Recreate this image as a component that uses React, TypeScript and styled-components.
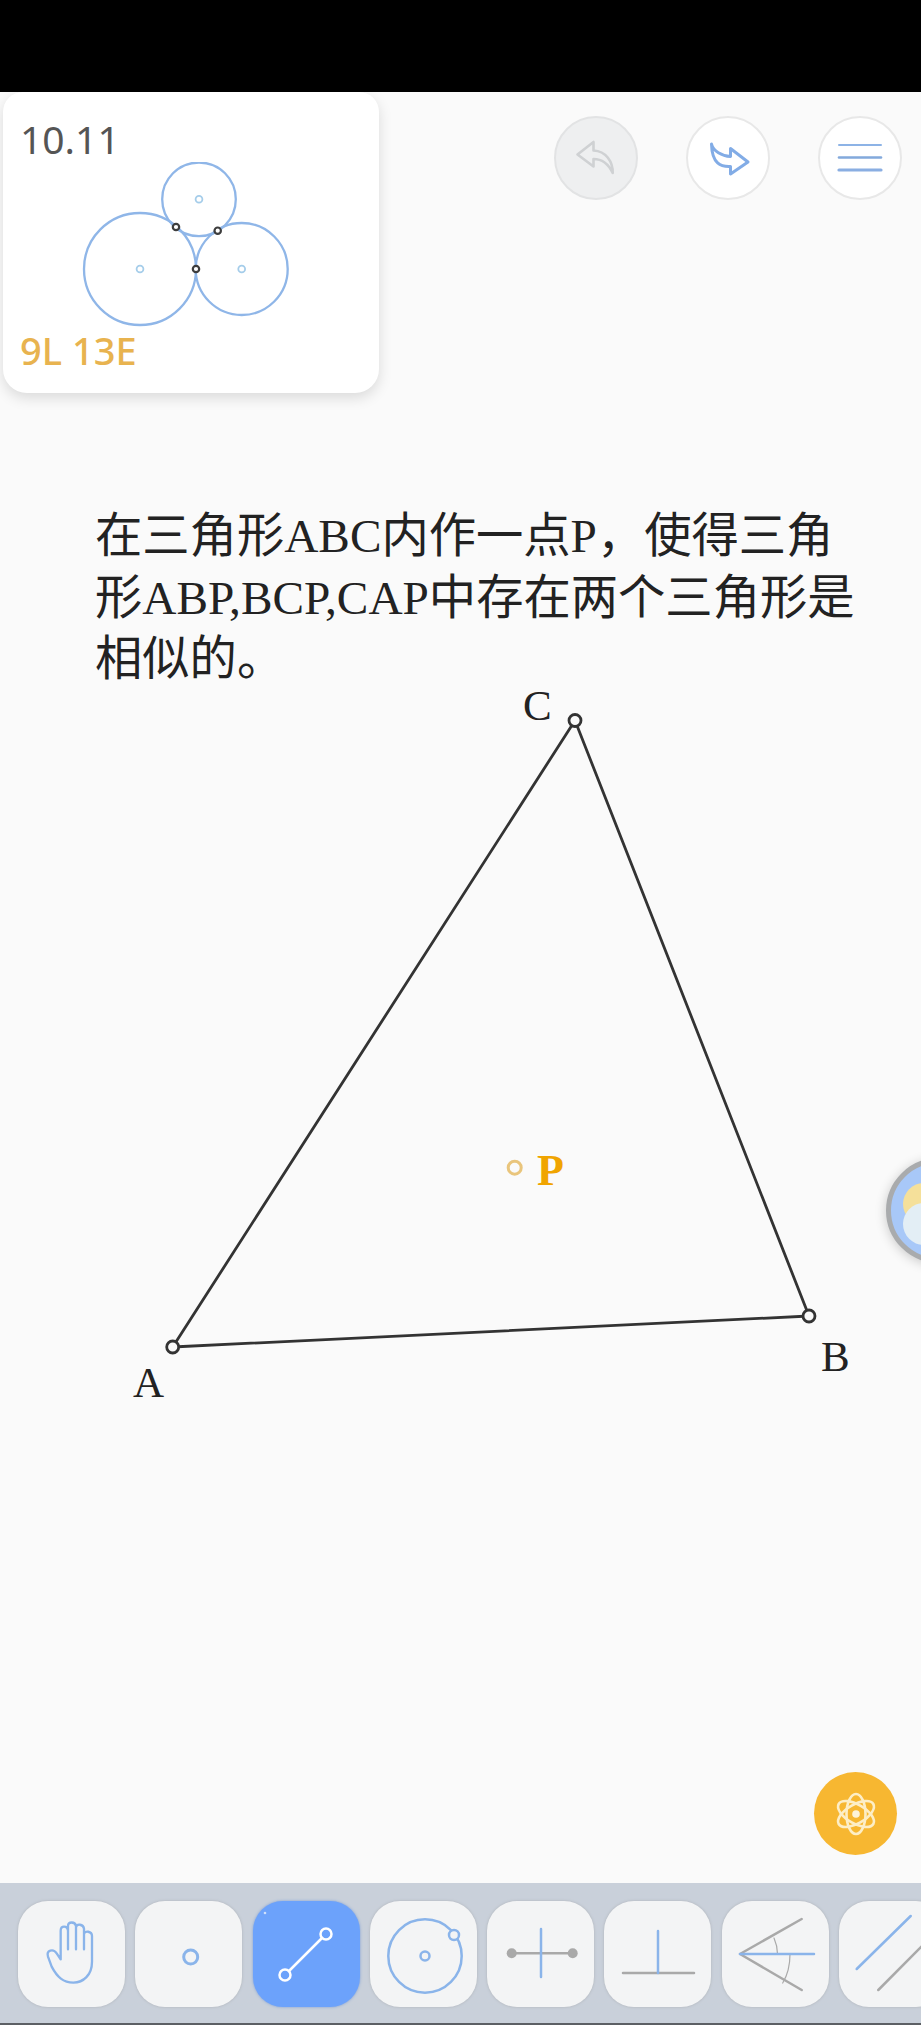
import React from "react";
import styled, { createGlobalStyle } from "styled-components";

const blue = "#8ab4ea";
const gray = "#a9a9a9";

const Global = createGlobalStyle`
  html, body { margin: 0; padding: 0; background: #fafafa; }
  #root { width: 921px; height: 2025px; }
`;

const Screen = styled.div`
  width: 921px;
  height: 2025px;
  display: flex;
  flex-direction: column;
  overflow: hidden;
  background: #fafafa;
`;

const StatusBar = styled.div`
  flex: 0 0 92px;
  background: #000;
`;

const Workspace = styled.main`
  position: relative;
  flex: 1;
  min-height: 0;
  overflow: hidden;
`;

const TopRow = styled.div`
  display: flex;
  justify-content: space-between;
  align-items: flex-start;
  padding: 0 19px 0 3px;
`;

const LevelCard = styled.div`
  width: 376px;
  height: 301px;
  box-sizing: border-box;
  padding: 24px 0 0 17px;
  background: #fff;
  border-radius: 20px 20px 24px 24px;
  box-shadow: 0 5px 14px rgba(0, 0, 0, 0.13);
  font-family: "Noto Sans", sans-serif;
`;

const LevelTitle = styled.div`
  height: 46px;
  font-size: 39px;
  line-height: 46px;
  color: #555;
`;

const Thumbnail = styled.svg`
  display: block;
  width: 340px;
  height: 168px;
`;

const LevelScore = styled.div`
  font-size: 38px;
  line-height: 40px;
  font-weight: 500;
  color: #e8b34f;
`;

const RoundButtons = styled.div`
  display: flex;
  gap: 48px;
  margin-top: 24px;
`;

const RoundButton = styled.button<{ $disabled?: boolean }>`
  width: 84px;
  height: 84px;
  padding: 0;
  box-sizing: border-box;
  border-radius: 50%;
  border: 2px solid ${(p) => (p.$disabled ? "#e2e3e4" : "#e8e8e8")};
  background: ${(p) => (p.$disabled ? "#eeeff0" : "#fff")};
  display: flex;
  align-items: center;
  justify-content: center;
`;

const RoundIcon = styled.svg`
  display: block;
  width: 84px;
  height: 84px;
  flex: none;
`;

const Question = styled.p`
  margin: 113px 0 -12px 95px;
  width: 780px;
  font-family: "Liberation Serif", "Noto Sans CJK SC", serif;
  font-size: 47.3px;
  line-height: 61.5px;
  color: #222;
`;

const Diagram = styled.svg`
  display: block;
  width: 921px;
  height: 732px;
`;

const PointLabel = styled.text<{ $accent?: boolean }>`
  font-family: "Liberation Serif", serif;
  font-size: ${(p) => (p.$accent ? 44 : 43)}px;
  font-weight: ${(p) => (p.$accent ? 700 : 400)};
  fill: ${(p) => (p.$accent ? "#f0a400" : "#222")};
`;

const HintFab = styled.button`
  position: absolute;
  right: 24px;
  bottom: 28px;
  width: 83px;
  height: 83px;
  padding: 0;
  border: 0;
  border-radius: 50%;
  background: #f7b731;
  display: flex;
  align-items: center;
  justify-content: center;
`;

const SideBall = styled.div`
  position: absolute;
  top: 1066px;
  right: -70px;
  width: 105px;
  height: 105px;
  box-sizing: border-box;
  border-radius: 50%;
  border: 5px solid #a9abad;
  background: #a8c8f8;
  box-shadow: 0 2px 12px rgba(0, 0, 0, 0.2);
`;

const Bubble = styled.span<{ $top: number; $color: string }>`
  position: absolute;
  left: 12px;
  top: ${(p) => p.$top}px;
  width: 42px;
  height: 42px;
  border-radius: 50%;
  background: ${(p) => p.$color};
`;

const Toolbar = styled.nav`
  flex: 0 0 140px;
  box-sizing: border-box;
  display: flex;
  gap: 10.3px;
  padding: 18px 0 0 18px;
  background: #c9d0da;
  overflow: hidden;
`;

const Tool = styled.button<{ $active?: boolean }>`
  flex: 0 0 107px;
  height: 106px;
  padding: 0;
  box-sizing: border-box;
  border-radius: 30px;
  background: ${(p) => (p.$active ? "#6ca2fb" : "#f3f4f5")};
  border: 0;
  box-shadow: 0 0 3px ${(p) => (p.$active ? "#7d9fd6" : "#aeb2b8")};
`;

const ToolIcon = styled.svg`
  display: block;
  width: 107px;
  height: 106px;
`;

const BottomEdge = styled.div`
  flex: 0 0 2px;
  background: #5c5f64;
`;

const Ring = styled.circle<{ $color: string; $fill?: string; $w?: number }>`
  fill: ${(p) => p.$fill ?? "none"};
  stroke: ${(p) => p.$color};
  stroke-width: ${(p) => p.$w ?? 2.5};
`;

const Stroke = styled.path<{ $color: string; $w?: number }>`
  fill: none;
  stroke: ${(p) => p.$color};
  stroke-width: ${(p) => p.$w ?? 2.5};
  stroke-linecap: round;
  stroke-linejoin: round;
`;

const tangent: [number, number][] = [
  [176, 227],
  [217.7, 230.7],
  [196, 269],
];

const circles: [number, number, number][] = [
  [140, 269, 56],
  [241.7, 269, 46],
  [199, 199.3, 36.8],
];

export default function App() {
  return (
    <Screen>
      <Global />
      <StatusBar />
      <Workspace>
        <TopRow>
          <LevelCard>
            <LevelTitle>10.11</LevelTitle>
            <Thumbnail viewBox="20 162 340 168">
              {circles.map(([x, y, r]) => (
                <g key={x}>
                  <Ring cx={x} cy={y} r={r} $color="#8fb6e8" $w={2.3} />
                  <Ring cx={x} cy={y} r={3.4} $color="#a5cdea" $w={1.8} />
                </g>
              ))}
              {tangent.map(([x, y]) => (
                <Ring key={x} cx={x} cy={y} r={3.2} $color="#3d3d3d" $fill="#fff" $w={2.2} />
              ))}
            </Thumbnail>
            <LevelScore>9L 13E</LevelScore>
          </LevelCard>
          <RoundButtons>
            <RoundButton $disabled aria-label="undo">
              <RoundIcon viewBox="0 0 84 84">
                <Stroke $color="#cfd1d3" $w={2.6} d="M23.5 38.5 L39.5 26 V34.5 C52 35 59 46 58.7 57 C54 47 47 43 39.5 43 V50.5 Z" />
              </RoundIcon>
            </RoundButton>
            <RoundButton aria-label="redo">
              <RoundIcon viewBox="0 0 84 84">
                <Stroke $color="#82ace6" $w={3} d="M25.5 28 C27 35 36 40 44.5 40.5 V32.5 L62 46 L44.5 58 V50.5 C35 51 26 48 25.5 28 Z" />
              </RoundIcon>
            </RoundButton>
            <RoundButton aria-label="menu">
              <RoundIcon viewBox="0 0 84 84">
                <Stroke $color="#8db3e6" $w={2} d="M21 29 H63" />
                <Stroke $color="#83a9dc" $w={2.6} d="M21 41.5 H63" />
                <Stroke $color="#8aaee2" $w={3.2} d="M21 54 H63" />
              </RoundIcon>
            </RoundButton>
          </RoundButtons>
        </TopRow>

        <Question>在三角形ABC内作一点P，使得三角形ABP,BCP,CAP中存在两个三角形是相似的。</Question>

        <Diagram viewBox="0 678 921 732">
          <Stroke $color="#333" $w={2.8} d="M172.7 1346 L575 719.5 L809 1315 Z" />
          <Ring cx={172.7} cy={1346} r={6} $color="#333" $fill="#fafafa" $w={2.8} />
          <Ring cx={575} cy={719.5} r={6} $color="#333" $fill="#fafafa" $w={2.8} />
          <Ring cx={809} cy={1315} r={6} $color="#333" $fill="#fafafa" $w={2.8} />
          <Ring cx={514.7} cy={1166.7} r={6.5} $color="#e9c57c" $fill="#fafafa" $w={3} />
          <PointLabel x={133} y={1396}>A</PointLabel>
          <PointLabel x={821} y={1370}>B</PointLabel>
          <PointLabel x={523} y={719}>C</PointLabel>
          <PointLabel $accent x={537} y={1184}>P</PointLabel>
        </Diagram>

        <SideBall>
          <Bubble $top={20} $color="#f5e09a" />
          <Bubble $top={40} $color="#e3eef5" />
        </SideBall>

        <HintFab aria-label="hint">
          <svg width="48" height="48" viewBox="-24 -24 48 48">
            <g fill="none" stroke="#fdeec6" strokeWidth="2.6">
              <ellipse rx="20" ry="9.5" transform="rotate(30)" />
              <ellipse rx="20" ry="9.5" transform="rotate(90)" />
              <ellipse rx="20" ry="9.5" transform="rotate(150)" />
            </g>
            <circle r="3.8" fill="#fdf3d8" />
          </svg>
        </HintFab>
      </Workspace>

      <Toolbar>
        <Tool aria-label="hand">
          <ToolIcon viewBox="-6 3 321 318">
            <Stroke
              $color={blue}
              $w={7}
              d="M122 178 V92 C122 76 142 76 144 92 V148 M144 92 V78 C144 64 166 64 168 78 V148 M168 82 C170 70 190 72 192 86 V148 M192 102 C194 90 216 94 216 108 V185 C216 225 190 248 160 248 C130 248 112 232 95 200 L84 170 C78 150 100 145 110 160 L122 178"
            />
          </ToolIcon>
        </Tool>
        <Tool aria-label="point">
          <ToolIcon viewBox="0 0 107 106">
            <Ring cx={55.7} cy={56} r={7} $color={blue} $w={3} />
          </ToolIcon>
        </Tool>
        <Tool $active aria-label="segment">
          <ToolIcon viewBox="0 0 107 106">
            <Stroke $color="#fff" d="M36 70 L69 37" />
            <Ring cx={32} cy={74} r={5.5} $color="#fff" />
            <Ring cx={73} cy={33} r={5.5} $color="#fff" />
            <circle cx={12} cy={12} r={1.3} fill="#cfe0fb" />
          </ToolIcon>
        </Tool>
        <Tool aria-label="circle">
          <ToolIcon viewBox="0 0 107 106">
            <Ring cx={55} cy={55} r={36.7} $color={blue} />
            <Ring cx={55} cy={55} r={4.5} $color={blue} />
            <Ring cx={84} cy={34} r={5} $color={blue} $fill="#f3f4f5" />
          </ToolIcon>
        </Tool>
        <Tool aria-label="perpendicular bisector">
          <ToolIcon viewBox="0 0 107 106">
            <Stroke $color={gray} d="M25 52.3 H86" />
            <circle cx={24.7} cy={52.3} r={5} fill={gray} />
            <circle cx={85.7} cy={52.3} r={5} fill={gray} />
            <Stroke $color={blue} d="M54 28 V76" />
          </ToolIcon>
        </Tool>
        <Tool aria-label="perpendicular">
          <ToolIcon viewBox="0 0 107 106">
            <Stroke $color={gray} d="M19 72 H90" />
            <Stroke $color={blue} d="M54 30 V72" />
          </ToolIcon>
        </Tool>
        <Tool aria-label="angle bisector">
          <ToolIcon viewBox="0 0 107 106">
            <Stroke $color={gray} d="M18 53 L79.7 18 M18 53 L79.7 89" />
            <Stroke $color={gray} $w={1.2} d="M52 37 Q55.5 45 55.5 53 M68 53 Q68 70 60.7 82" />
            <Stroke $color={blue} d="M18 53 H92" />
          </ToolIcon>
        </Tool>
        <Tool aria-label="parallel">
          <ToolIcon viewBox="0 0 107 106">
            <Stroke $color={blue} d="M17.7 68 L71.7 15" />
            <Stroke $color={gray} d="M39.3 89 L100 28" />
          </ToolIcon>
        </Tool>
      </Toolbar>
      <BottomEdge />
    </Screen>
  );
}
